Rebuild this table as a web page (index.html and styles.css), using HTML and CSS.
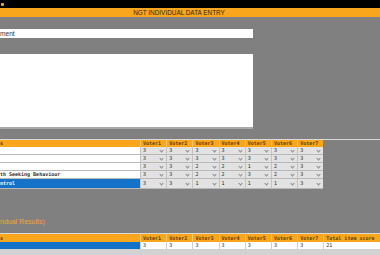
FILE: index.html
```html
<!DOCTYPE html>
<html>
<head>
<meta charset="utf-8">
<title>NGT Individual Data Entry</title>
<link rel="stylesheet" href="styles.css">
</head>
<body>
<header class="topbar"><span class="logo"></span></header>
<div class="titlebar"><span>NGT INDIVIDUAL DATA ENTRY</span></div>
<main class="content">
  <div class="field">ment</div>
  <div class="textarea"></div>

  <section class="entry">
    <div class="grid head">
      <div class="lbl">s</div>
      <div class="hc">Voter1</div><div class="hc">Voter2</div><div class="hc">Voter3</div><div class="hc">Voter4</div><div class="hc">Voter5</div><div class="hc">Voter6</div><div class="hc">Voter7</div>
    </div>
    <div class="grid row">
      <div class="lbl"></div>
      <div class="sel">3<span class="chev"></span></div><div class="sel">3<span class="chev"></span></div><div class="sel">3<span class="chev"></span></div><div class="sel">3<span class="chev"></span></div><div class="sel">3<span class="chev"></span></div><div class="sel">3<span class="chev"></span></div><div class="sel">3<span class="chev"></span></div>
    </div>
    <div class="grid row">
      <div class="lbl"></div>
      <div class="sel">3<span class="chev"></span></div><div class="sel">3<span class="chev"></span></div><div class="sel">3<span class="chev"></span></div><div class="sel">3<span class="chev"></span></div><div class="sel">3<span class="chev"></span></div><div class="sel">3<span class="chev"></span></div><div class="sel">3<span class="chev"></span></div>
    </div>
    <div class="grid row">
      <div class="lbl"></div>
      <div class="sel">3<span class="chev"></span></div><div class="sel">3<span class="chev"></span></div><div class="sel">2<span class="chev"></span></div><div class="sel">2<span class="chev"></span></div><div class="sel">1<span class="chev"></span></div><div class="sel">2<span class="chev"></span></div><div class="sel">3<span class="chev"></span></div>
    </div>
    <div class="grid row">
      <div class="lbl">th Seeking Behaviour</div>
      <div class="sel">3<span class="chev"></span></div><div class="sel">3<span class="chev"></span></div><div class="sel">2<span class="chev"></span></div><div class="sel">2<span class="chev"></span></div><div class="sel">3<span class="chev"></span></div><div class="sel">2<span class="chev"></span></div><div class="sel">3<span class="chev"></span></div>
    </div>
    <div class="grid row active">
      <div class="lbl">ntrol</div>
      <div class="sel">3<span class="chev"></span></div><div class="sel">3<span class="chev"></span></div><div class="sel">1<span class="chev"></span></div><div class="sel">1<span class="chev"></span></div><div class="sel">1<span class="chev"></span></div><div class="sel">1<span class="chev"></span></div><div class="sel">3<span class="chev"></span></div>
    </div>
  </section>

  <h2 class="results-title">ndual Results)</h2>

  <section class="results">
    <div class="rgrid rhead">
      <div class="lbl">s</div>
      <div class="hc">Voter1</div><div class="hc">Voter2</div><div class="hc">Voter3</div><div class="hc">Voter4</div><div class="hc">Voter5</div><div class="hc">Voter6</div><div class="hc">Voter7</div><div class="hc">Total item score</div>
    </div>
    <div class="rgrid rrow">
      <div class="lbl"></div>
      <div class="rc">3</div><div class="rc">3</div><div class="rc">3</div><div class="rc">3</div><div class="rc">3</div><div class="rc">3</div><div class="rc">3</div><div class="rc">21</div>
    </div>
  </section>
</main>
<div class="scrollbar"></div>
</body>
</html>
```

FILE: styles.css
```css
html, body {
  margin: 0;
  padding: 0;
}
body {
  width: 380px;
  height: 255px;
  overflow: hidden;
  background: #808080;
  font-family: "DejaVu Sans Mono", monospace;
  display: flex;
  flex-direction: column;
}
.topbar {
  height: 8px;
  background: #000;
  display: flex;
  align-items: center;
  padding-left: 1px;
}
.logo {
  width: 3px;
  height: 3px;
  background: #f5a623;
  border-radius: 1px;
}
.titlebar {
  height: 9px;
  background: #f9a61c;
  display: flex;
  justify-content: center;
  align-items: center;
  padding-right: 22px;
  font: 6.4px "Liberation Sans", Arial, sans-serif;
  color: #33240a;
}
.content {
  flex: 1;
  padding-top: 12px;
  display: flex;
  flex-direction: column;
}
.field {
  width: 253px;
  height: 9px;
  background: #fff;
  font: 6.6px/9px "Liberation Sans", Arial, sans-serif;
  color: #333;
}
.textarea {
  margin-top: 16px;
  width: 253px;
  height: 73px;
  background: #fff;
  border-bottom: 2px solid #a9a9a9;
}
.entry {
  margin-top: 10px;
  border-top: 1px solid #d9d9d9;
}
.grid {
  display: grid;
  grid-template-columns: 140px repeat(7, 26.2px);
  width: 323.4px;
}
.head {
  height: 7px;
  background: #f9a61c;
  font-size: 5px;
  font-weight: bold;
  line-height: 7px;
  color: #5a3d08;
}
.hc {
  padding-left: 2px;
  border-left: 1px solid #fbc56a;
}
.lbl {
  font-size: 5px;
  font-weight: bold;
  color: #2b2b2b;
  white-space: nowrap;
  overflow: hidden;
}
.row {
  height: 7px;
  border-bottom: 1px solid #b9b9b9;
  line-height: 7px;
}
.row .lbl {
  background: #fff;
}
.row.active {
  height: 9px;
  line-height: 9px;
}
.row.active .lbl {
  background: #1473c9;
  color: #fff;
}
.sel {
  position: relative;
  background: #e2e2e2;
  border-left: 1px solid #c4c4c4;
  font-size: 5px;
  color: #222;
  padding-left: 2px;
}
.chev {
  position: absolute;
  right: 3px;
  top: 50%;
  width: 2px;
  height: 2px;
  margin-top: -2px;
  border-right: 1px solid #8a8a8a;
  border-bottom: 1px solid #8a8a8a;
  transform: rotate(45deg);
}
.results-title {
  margin: 29px 0 7px;
  height: 8px;
  font: 7px/8px "Liberation Sans", Arial, sans-serif;
  color: #f2a33a;
}
.results {
  border-top: 1px solid #d9d9d9;
}
.rgrid {
  display: grid;
  grid-template-columns: 140px repeat(7, 26.2px) 1fr;
}
.rhead {
  height: 8px;
  background: #f9a61c;
  font-size: 5px;
  font-weight: bold;
  line-height: 8px;
  color: #5a3d08;
}
.rrow {
  height: 7px;
  line-height: 7px;
  background: #fff;
}
.rrow .lbl {
  background: #1473c9;
}
.rc {
  font-size: 5px;
  color: #222;
  padding-left: 2px;
  border-left: 1px solid #cfcfcf;
}
.scrollbar {
  height: 6px;
  background: #d2d2d2;
}
```
